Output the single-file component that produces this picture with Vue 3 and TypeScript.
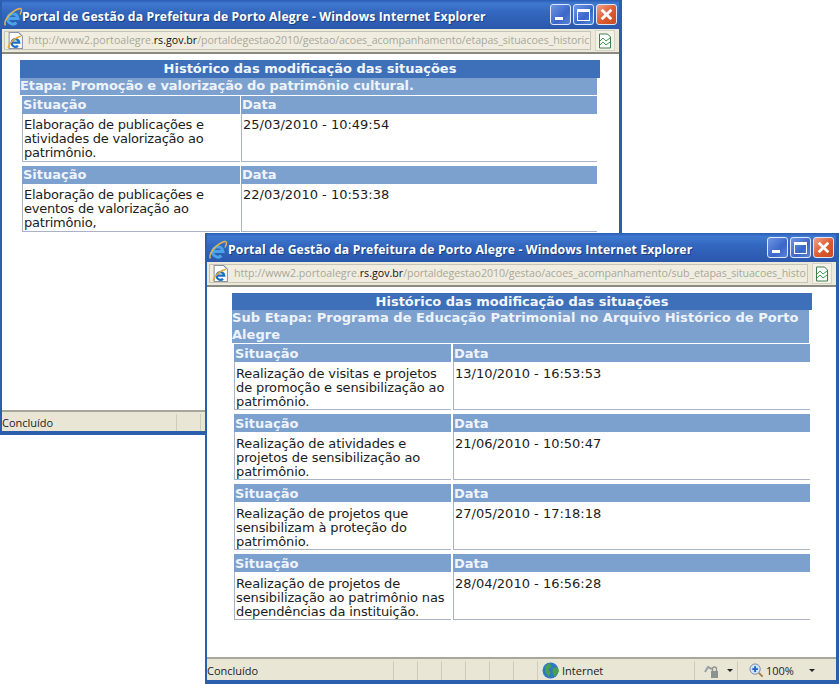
<script setup lang="ts">
interface Row { text: string[]; date: string }
interface Win {
  key: string
  kind: string
  path: string
  headingLines: string[]
  rows: Row[]
  cells: number
  full: boolean
}
const windows: Win[] = [
  {
    key: 'a', kind: 'first',
    path: '/portaldegestao2010/gestao/acoes_acompanhamento/etapas_situacoes_historic',
    headingLines: ['Etapa: Promoção e valorização do patrimônio cultural.'],
    rows: [
      { text: ['Elaboração de publicações e', 'atividades de valorização ao', 'patrimônio.'], date: '25/03/2010 - 10:49:54' },
      { text: ['Elaboração de publicações e', 'eventos de valorização ao', 'patrimônio,'], date: '22/03/2010 - 10:53:38' }
    ],
    cells: 2, full: false
  },
  {
    key: 'b', kind: 'second',
    path: '/portaldegestao2010/gestao/acoes_acompanhamento/sub_etapas_situacoes_histo',
    headingLines: ['Sub Etapa: Programa de Educação Patrimonial no Arquivo Histórico de Porto', 'Alegre'],
    rows: [
      { text: ['Realização de visitas e projetos', 'de promoção e sensibilização ao', 'patrimônio.'], date: '13/10/2010 - 16:53:53' },
      { text: ['Realização de atividades e', 'projetos de sensibilização ao', 'patrimônio.'], date: '21/06/2010 - 10:50:47' },
      { text: ['Realização de projetos que', 'sensibilizam à proteção do', 'patrimônio.'], date: '27/05/2010 - 17:18:18' },
      { text: ['Realização de projetos de', 'sensibilização ao patrimônio nas', 'dependências da instituição.'], date: '28/04/2010 - 16:56:28' }
    ],
    cells: 6, full: true
  }
]
</script>

<template>
  <div class="desk">
    <section v-for="w in windows" :key="w.key" class="win" :class="w.kind">
      <header class="title">
        <svg class="ie" viewBox="0 0 20 20" width="20" height="20">
          <path d="M5.500 11.500h9.500a5.200 5.200 0 1 0-1.600 4.200" fill="none" stroke="#4aa3e8" stroke-width="3"/>
          <path d="M2.500 18.500C0 15 7 4.500 16.500 1.500c2.500-.5 2.500 2.500.5 6" fill="none" stroke="#e4b64a" stroke-width="1.500"/>
        </svg>
        <span class="title-text">Portal de Gestão da Prefeitura de Porto Alegre - Windows Internet Explorer</span>
        <span class="btns">
          <span class="btn"><i class="min"></i></span>
          <span class="btn"><i class="max"></i></span>
          <span class="btn close">
            <svg viewBox="0 0 14 14" width="15" height="15"><path d="M2.500 2.500l9 9M11.500 2.500l-9 9" stroke="#fff" stroke-width="2.600"/></svg>
          </span>
        </span>
      </header>
      <div class="addr">
        <div class="field">
          <svg class="page" viewBox="0 0 16 16" width="17" height="17">
            <path d="M2 .5h9l3.500 3.500v11.500H2z" fill="#fff" stroke="#8a94a5"/>
            <path d="M4.500 10h7a3.600 3.600 0 1 0-1.100 3" fill="none" stroke="#1f6fc0" stroke-width="2.200"/>
            <path d="M1 15C2 10 8 5 13 4" stroke="#e5a92c" stroke-width="1.300" fill="none"/>
          </svg>
          <span class="url">http://www2.portoalegre.<b>rs.gov.br</b><span class="tail">{{ w.path }}</span></span>
        </div>
        <span class="go">
          <svg viewBox="0 0 16 16" width="16" height="16">
            <path d="M2.500 1h8l3 3v11h-11z" fill="#fff" stroke="#3e7d4a"/>
            <path d="M3 8l3-3 3 3 4-3M3 12l3-3 3 3 4-3" stroke="#3ea14f" fill="none"/>
          </svg>
        </span>
      </div>
      <main class="content">
        <div class="sheet">
          <h1 class="caption">Histórico das modificação das situações</h1>
          <h2 class="stage"><span v-for="l in w.headingLines" :key="l">{{ l }}</span></h2>
          <div v-for="r in w.rows" :key="r.date" class="record">
            <div class="cols heads">
              <div class="head">Situação</div>
              <div class="head">Data</div>
            </div>
            <div class="cols">
              <div class="cell"><span v-for="t in r.text" :key="t" class="line">{{ t }}</span></div>
              <div class="cell">{{ r.date }}</div>
            </div>
          </div>
        </div>
      </main>
      <footer class="status">
        <span class="done">Concluído</span>
        <span class="slots"><span v-for="n in w.cells" :key="n" class="slot"></span></span>
        <template v-if="w.full">
          <span class="zone">
            <svg viewBox="0 0 16 16" width="17" height="17">
              <circle cx="8" cy="8" r="7.500" fill="#2f78c4"/>
              <path d="M3 4l4-3 2 3-3 3 2 3-2 4-3-5zM10 6l5-1 1 4-4 5-2-4z" fill="#48a050"/>
            </svg>
            Internet
          </span>
          <span class="prot">
            <svg viewBox="0 0 16 16" width="16" height="16">
              <path d="M1 9l3-5 4 2" stroke="#9aa0a0" stroke-width="2" fill="none"/>
              <rect x="7" y="8" width="7" height="7" fill="#8d9291"/>
              <path d="M8.500 8V6a2 2 0 0 1 4 0v2" stroke="#8d9291" stroke-width="1.300" fill="none"/>
            </svg>
            <i class="arrow"></i>
          </span>
          <span class="zoom">
            <svg viewBox="0 0 16 16" width="15" height="15">
              <circle cx="6.500" cy="6.500" r="5.500" fill="#cfe3f6" stroke="#7a8ba0"/>
              <path d="M6.500 3.500v6M3.500 6.500h6" stroke="#1f62c4" stroke-width="2"/>
              <path d="M10.500 10.500l4 4" stroke="#a9793e" stroke-width="2"/>
            </svg>
            100%
            <i class="arrow"></i>
          </span>
        </template>
      </footer>
    </section>
  </div>
</template>

<style>
html, body { margin: 0; background: #fff; }
</style>

<style scoped>
.desk { position: relative; width: 839px; height: 684px; overflow: hidden; background: #fff; }
.win {
  position: absolute; box-sizing: border-box; display: flex; flex-direction: column;
  border: solid #2b5fae; border-width: 0 3px 4px 2px; background: #fff;
  font-family: "DejaVu Sans", Verdana, sans-serif; color: #1c1c1c;
}
.first { left: 0; top: 0; width: 622px; height: 435px; }
.second { left: 205px; top: 233px; width: 634px; height: 451px; }
.title {
  height: 29px; flex: none; display: flex; align-items: center; padding: 5px 0 0 1px;
  background: linear-gradient(#2a5cb4 0, #3f78d0 12%, #3366bd 45%, #2a58ad 100%);
  color: #fff; box-sizing: border-box;
}
.ie { flex: none; margin: 0 -1px 0 0; }
.title-text { font: 700 12.200px/1 "Open Sans", Tahoma, sans-serif; letter-spacing: .12px; white-space: nowrap; flex: 1; text-shadow: 1px 1px 0 #1b3f80; }
.second .title-text { letter-spacing: .13px; padding-left: 1px; }
.btns { display: flex; gap: 2px; margin: -5px 2px 0 0; }
.btn {
  width: 21px; height: 21px; box-sizing: border-box; border: 1px solid #dfe8f8; border-radius: 3px;
  background: linear-gradient(135deg, #6f97e4, #3a66c8 60%, #5a84d8); display: flex; align-items: center; justify-content: center; position: relative;
}
.btn i { display: block; box-sizing: border-box; }
.min { width: 8px; height: 3px; background: #fff; position: absolute; left: 4px; bottom: 4px; }
.max { width: 13px; height: 12px; border: 1px solid #fff; border-top-width: 3px; }
.close { background: linear-gradient(135deg, #f0a088, #dc5a30 55%, #cc4a20); }
.addr {
  height: 25px; flex: none; display: flex; align-items: center; background: #ece9d8; padding: 0 2px;
  border-bottom: 2px solid #8b8a80; box-sizing: border-box; gap: 4px;
}
.field { flex: 1; min-width: 0; height: 19px; display: flex; align-items: center; gap: 4px; padding-left: 2px; background: #f0ede0; border: 1px solid #c6c4b4; box-sizing: border-box; }
.second .field { gap: 5px; }
.page { flex: none; }
.url { font: 10.650px/1 "Open Sans", Tahoma, sans-serif; color: #a8a89a; white-space: nowrap; }
.url b { font-weight: 400; color: #111; }
.tail { letter-spacing: -.08px; }
.go { width: 20px; height: 21px; flex: none; display: flex; align-items: center; justify-content: center; background: #f4f2e8; border: 1px solid #d6d3c4; box-sizing: border-box; margin-right: 2px; }
.content { flex: 1; min-height: 0; background: #fff; }
.first .content { padding: 6px 19px 0 18px; }
.second .content { padding: 6px 25px 0 25px; }
.sheet { width: 580px; }
.caption {
  margin: 0; height: 18px; background: #3d70b8; color: #f2f6fc; text-align: center;
  font-size: 13px; font-weight: 700; line-height: 18px; white-space: nowrap;
}
.second .caption { height: 17px; line-height: 18px; }
.stage {
  margin: 0 3px 1px 0; background: #7da1cf; color: #eef3fa; font-size: 13px; font-weight: 700;
  line-height: 16.500px; display: flex; flex-direction: column; white-space: nowrap; letter-spacing: -.1px;
}
.second .stage { letter-spacing: .05px; }
.record { padding: 0 3px 4px 2px; }
.second .record { padding-right: 2px; }
.cols { display: grid; grid-template-columns: 218px 1fr; column-gap: 1px; }
.second .cols { grid-template-columns: 217px 1fr; column-gap: 2px; }
.head { height: 18px; background: #7da1cf; color: #f0f4fa; font-weight: 700; font-size: 13px; line-height: 18px; padding-left: 1px; }
.second .head { line-height: 19px; }
.cell {
  height: 48px; box-sizing: border-box; border-left: 1px solid #a8b4c6; border-bottom: 1px solid #a8b4c6;
  font-size: 13px; line-height: 14px; padding: 4px 0 0 1px; display: flex; flex-direction: column; white-space: nowrap;
}
.second .cell { padding-top: 5px; }
.line { letter-spacing: -.23px; }
.second .line { letter-spacing: -.12px; }
.status {
  height: 21px; flex: none; display: flex; align-items: center; background: #e9e6d6; border-top: 2px solid #a9a799; box-sizing: border-box;
  font: 11px/1 "Open Sans", Tahoma, sans-serif; color: #222; padding-top: 2px;
}
.second .status { height: 23px; }
.done { padding-left: 0; width: 174px; flex: none; }
.second .done { width: 186px; }
.slots { display: flex; height: 100%; }
.slot { width: 24px; box-sizing: border-box; border-left: 1px solid #cfccbb; }
.zone { display: flex; align-items: center; gap: 3px; width: 157px; padding-left: 4px; box-sizing: border-box; border-left: 1px solid #cfccbb; height: 100%; }
.prot { display: flex; align-items: center; gap: 7px; width: 43px; padding-left: 9px; box-sizing: border-box; border-left: 1px solid #cfccbb; height: 100%; }
.zoom { display: flex; align-items: center; gap: 2px; flex: 1; padding-left: 11px; border-left: 1px solid #cfccbb; height: 100%; }
.arrow { width: 0; height: 0; border: 3px solid transparent; border-top: 3px solid #222; border-bottom: 0; }
.zoom .arrow { margin-left: 13px; }
</style>
